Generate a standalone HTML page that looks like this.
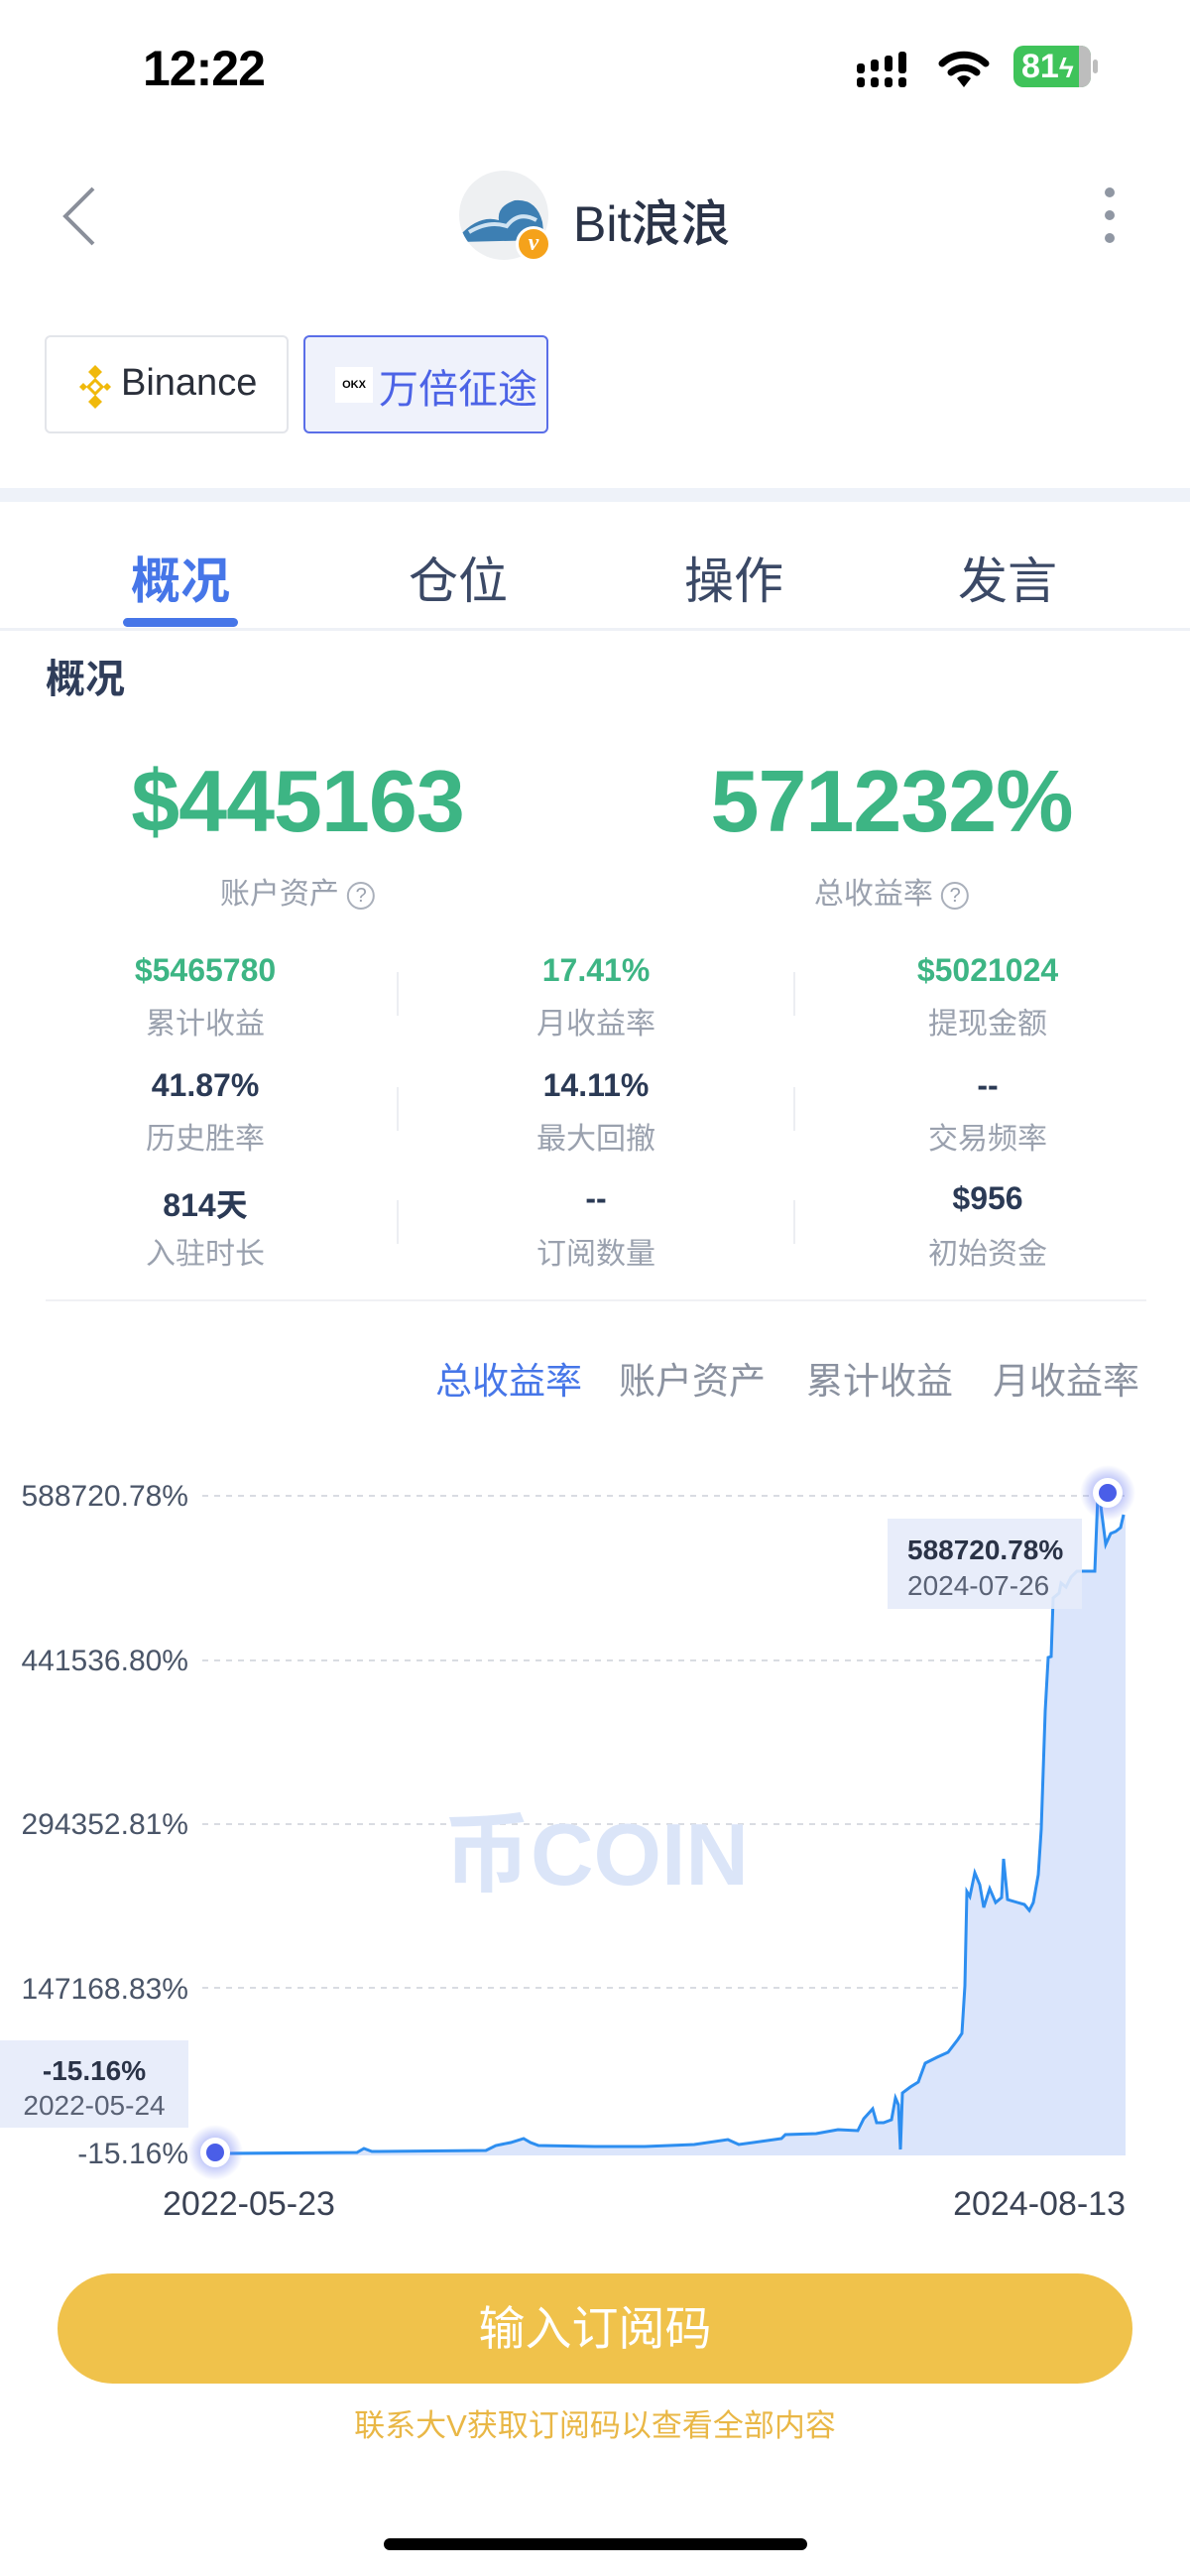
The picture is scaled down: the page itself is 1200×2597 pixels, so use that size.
<!DOCTYPE html>
<html><head><meta charset="utf-8">
<style>
*{margin:0;padding:0;box-sizing:border-box}
body{width:1200px;height:2597px;background:#fff;font-family:"Liberation Sans","Noto Sans CJK SC",sans-serif;position:relative;overflow:hidden;color:#2b3a55}
.a{position:absolute}
.c{transform:translateX(-50%);white-space:nowrap;text-align:center}
.g{color:#3db584}
.lbl{font-size:30px;color:#9aa1ae}
.val{font-size:32px;font-weight:bold}
</style></head><body>
<!-- status bar -->
<div class="a" style="left:144px;top:40px;font-size:50px;font-weight:bold;color:#000;letter-spacing:-1px">12:22</div>
<svg class="a" style="left:862px;top:50px" width="90" height="40" viewBox="0 0 90 40">
<rect x="2" y="14" width="8" height="10" rx="3" fill="#000"/><rect x="2" y="28" width="8" height="10" rx="3" fill="#000"/>
<rect x="16" y="10" width="8" height="12" rx="3" fill="#000"/><rect x="16" y="28" width="8" height="10" rx="3" fill="#000"/>
<rect x="30" y="6" width="8" height="16" rx="3" fill="#000"/><rect x="30" y="28" width="8" height="10" rx="3" fill="#000"/>
<rect x="44" y="2" width="8" height="22" rx="3" fill="#000"/><rect x="44" y="28" width="8" height="10" rx="3" fill="#000"/>
</svg>
<svg class="a" style="left:946px;top:48px" width="52" height="42" viewBox="0 0 52 42">
<path d="M4 16 A32 32 0 0 1 48 16" stroke="#000" stroke-width="7" fill="none" stroke-linecap="round"/>
<path d="M13 25 A20 20 0 0 1 39 25" stroke="#000" stroke-width="7" fill="none" stroke-linecap="round"/>
<path d="M19 31 L26 40 L33 31 A10 10 0 0 0 19 31Z" fill="#000"/></svg>
<div class="a" style="left:1022px;top:46px;width:78px;height:42px;border-radius:10px;background:#3fc35a;overflow:hidden"><div style="position:absolute;right:0;top:0;width:12px;height:42px;background:#bdbdbd"></div><div style="position:relative;color:#fff;font-weight:bold;font-size:34px;line-height:42px;padding-left:8px">81<span style="font-size:28px">ϟ</span></div></div>
<div class="a" style="left:1102px;top:60px;width:5px;height:14px;border-radius:3px;background:#bdbdbd"></div>
<!-- nav -->
<svg class="a" style="left:58px;top:186px" width="44" height="64" viewBox="0 0 44 64"><path d="M36 4 L8 32 L36 60" stroke="#8a8f9a" stroke-width="4" fill="none"/></svg>
<div class="a" style="left:463px;top:172px;width:90px;height:90px;border-radius:50%;background:#eef0f2;overflow:hidden">
<svg width="90" height="90" viewBox="0 0 90 90"><path d="M0 66 Q20 44 40 50 Q38 36 56 30 Q78 28 84 52 L86 70 L0 72Z" fill="#3d7fb3"/><path d="M10 62 Q30 50 48 56 Q60 40 78 50" stroke="#cfe3f2" stroke-width="4" fill="none"/></svg></div>
<div class="a" style="left:520px;top:228px;width:36px;height:36px;border-radius:50%;background:#f5a21b;border:3px solid #fff;color:#fff;font:bold italic 24px 'Liberation Serif',serif;text-align:center;line-height:28px">v</div>
<div class="a" style="left:578px;top:186px;font-size:50px;font-weight:500;color:#2a3347">Bit浪浪</div>
<div class="a" style="left:1114px;top:189px;width:10px;height:10px;border-radius:50%;background:#9097a3"></div>
<div class="a" style="left:1114px;top:212px;width:10px;height:10px;border-radius:50%;background:#9097a3"></div>
<div class="a" style="left:1114px;top:235px;width:10px;height:10px;border-radius:50%;background:#9097a3"></div>
<!-- exchanges -->
<div class="a" style="left:45px;top:338px;width:246px;height:99px;border:2px solid #e3e5ea;border-radius:6px"></div>
<svg class="a" style="left:76px;top:366px" width="40" height="48" viewBox="0 0 40 48"><g fill="#f0b90b"><path d="M20 2 L27 9 L20 16 L13 9Z"/><path d="M20 32 L27 39 L20 46 L13 39Z"/><path d="M4 24 l4-4 4 4-4 4z"/><path d="M28 24 l4-4 4 4-4 4z"/><path d="M20 17 l7 7-7 7-7-7z" fill="none" stroke="#f0b90b" stroke-width="3"/></g></svg>
<div class="a" style="left:122px;top:365px;font-size:38px;color:#2a2f3a">Binance</div>
<div class="a" style="left:306px;top:338px;width:247px;height:99px;border:2px solid #5a6ee8;border-radius:6px;background:#eff2fb"></div>
<div class="a" style="left:338px;top:370px;width:38px;height:36px;background:#fff;font-size:11px;font-weight:bold;line-height:36px;text-align:center;color:#000">OKX</div>
<div class="a" style="left:382px;top:360px;font-size:40px;color:#4c63e6">万倍征途</div>
<!-- band -->
<div class="a" style="left:0;top:492px;width:1200px;height:14px;background:#eef2f9"></div>
<!-- tabs -->
<div class="a c" style="left:182px;top:546px;font-size:50px;font-weight:bold;color:#4676e8">概况</div>
<div class="a c" style="left:462px;top:546px;font-size:50px;color:#3b4966">仓位</div>
<div class="a c" style="left:740px;top:546px;font-size:50px;color:#3b4966">操作</div>
<div class="a c" style="left:1016px;top:546px;font-size:50px;color:#3b4966">发言</div>
<div class="a" style="left:124px;top:623px;width:116px;height:9px;border-radius:5px;background:#4676e8"></div>
<div class="a" style="left:0;top:633px;width:1200px;height:3px;background:#eef1f6"></div>
<div class="a" style="left:46px;top:652px;font-size:40px;font-weight:bold;color:#2f3d5a">概况</div>
<!-- big numbers -->
<div class="a c g" style="left:300px;top:757px;font-size:88px;font-weight:bold;letter-spacing:-1px">$445163</div>
<div class="a c g" style="left:899px;top:757px;font-size:88px;font-weight:bold;letter-spacing:-1px">571232%</div>
<div class="a c lbl" style="left:300px;top:876px">账户资产 <span style="display:inline-block;width:28px;height:28px;border:2px solid #aab0bb;border-radius:50%;font-size:20px;line-height:24px;vertical-align:2px">?</span></div>
<div class="a c lbl" style="left:899px;top:876px">总收益率 <span style="display:inline-block;width:28px;height:28px;border:2px solid #aab0bb;border-radius:50%;font-size:20px;line-height:24px;vertical-align:2px">?</span></div>
<!-- stats -->
<div class="a c val g" style="left:207px;top:960px">$5465780</div>
<div class="a c val g" style="left:601px;top:960px">17.41%</div>
<div class="a c val g" style="left:996px;top:960px">$5021024</div>
<div class="a c lbl" style="left:207px;top:1007px">累计收益</div>
<div class="a c lbl" style="left:601px;top:1007px">月收益率</div>
<div class="a c lbl" style="left:996px;top:1007px">提现金额</div>
<div class="a c val" style="left:207px;top:1076px">41.87%</div>
<div class="a c val" style="left:601px;top:1076px">14.11%</div>
<div class="a c val" style="left:996px;top:1076px">--</div>
<div class="a c lbl" style="left:207px;top:1123px">历史胜率</div>
<div class="a c lbl" style="left:601px;top:1123px">最大回撤</div>
<div class="a c lbl" style="left:996px;top:1123px">交易频率</div>
<div class="a c val" style="left:207px;top:1190px">814天</div>
<div class="a c val" style="left:601px;top:1190px">--</div>
<div class="a c val" style="left:996px;top:1190px">$956</div>
<div class="a c lbl" style="left:207px;top:1239px">入驻时长</div>
<div class="a c lbl" style="left:601px;top:1239px">订阅数量</div>
<div class="a c lbl" style="left:996px;top:1239px">初始资金</div>
<div class="a" style="left:400px;top:980px;width:2px;height:44px;background:#eceef2"></div>
<div class="a" style="left:800px;top:980px;width:2px;height:44px;background:#eceef2"></div>
<div class="a" style="left:400px;top:1096px;width:2px;height:44px;background:#eceef2"></div>
<div class="a" style="left:800px;top:1096px;width:2px;height:44px;background:#eceef2"></div>
<div class="a" style="left:400px;top:1210px;width:2px;height:44px;background:#eceef2"></div>
<div class="a" style="left:800px;top:1210px;width:2px;height:44px;background:#eceef2"></div>
<div class="a" style="left:46px;top:1310px;width:1110px;height:2px;background:#f0f1f4"></div>
<!-- chart tabs -->
<div class="a" style="left:439px;top:1362px;font-size:37px;color:#4676e8">总收益率</div>
<div class="a" style="left:624px;top:1362px;font-size:37px;color:#8b92a0">账户资产</div>
<div class="a" style="left:813px;top:1362px;font-size:37px;color:#8b92a0">累计收益</div>
<div class="a" style="left:1001px;top:1362px;font-size:37px;color:#8b92a0">月收益率</div>
<!-- chart -->
<svg class="a" style="left:0;top:0" width="1200" height="2597" viewBox="0 0 1200 2597">
<defs><radialGradient id="gl"><stop offset="0.4" stop-color="#6b7cf0" stop-opacity="0.5"/><stop offset="1" stop-color="#6b7cf0" stop-opacity="0"/></radialGradient></defs>
<g stroke="#d9dce2" stroke-width="2" stroke-dasharray="6 6">
<line x1="204" y1="1508" x2="1135" y2="1508"/><line x1="204" y1="1674" x2="1135" y2="1674"/><line x1="204" y1="1839" x2="1135" y2="1839"/><line x1="204" y1="2004" x2="1135" y2="2004"/></g>
<g font-size="30" fill="#4a5568" text-anchor="end" font-family="Liberation Sans, sans-serif">
<text x="190" y="1518">588720.78%</text><text x="190" y="1684">441536.80%</text><text x="190" y="1849">294352.81%</text><text x="190" y="2015">147168.83%</text><text x="190" y="2181">-15.16%</text></g>
<text x="601" y="1900" text-anchor="middle" font-size="88" font-weight="bold" fill="#dbe5f8" font-family="Liberation Sans, Noto Sans CJK SC, sans-serif">币COIN</text>
<path d="M217 2171 L360 2170 L367 2166 L375 2169 L490 2168 L500 2163 L515 2160 L528 2156 L535 2160 L543 2163 L600 2164 L650 2164 L700 2162 L734 2157 L745 2162 L788 2156 L792 2152 L823 2151 L845 2147 L865 2148 L871 2136 L880 2126 L884 2140 L891 2140 L899 2137 L903 2115 L906 2122 L908 2167 L910 2110 L918 2104 L926 2099 L933 2080 L945 2074 L956 2069 L966 2056 L970 2050 L973 2002 L975 1907 L978 1912 L983 1888 L988 1900 L992 1923 L998 1904 L1004 1918 L1010 1913 L1012 1874 L1016 1915 L1026 1918 L1033 1920 L1038 1926 L1042 1918 L1047 1890 L1050 1844 L1054 1725 L1057 1671 L1060 1670 L1062 1611 L1068 1606 L1070 1596 L1075 1600 L1080 1590 L1086 1584 L1104 1584 L1107 1508 L1109 1510 L1115 1557 L1120 1546 L1125 1544 L1130 1540 L1133 1527 L1135 1527 L1135 2173 L217 2173Z" fill="#dbe5fb"/>
<path d="M217 2171 L360 2170 L367 2166 L375 2169 L490 2168 L500 2163 L515 2160 L528 2156 L535 2160 L543 2163 L600 2164 L650 2164 L700 2162 L734 2157 L745 2162 L788 2156 L792 2152 L823 2151 L845 2147 L865 2148 L871 2136 L880 2126 L884 2140 L891 2140 L899 2137 L903 2115 L906 2122 L908 2167 L910 2110 L918 2104 L926 2099 L933 2080 L945 2074 L956 2069 L966 2056 L970 2050 L973 2002 L975 1907 L978 1912 L983 1888 L988 1900 L992 1923 L998 1904 L1004 1918 L1010 1913 L1012 1874 L1016 1915 L1026 1918 L1033 1920 L1038 1926 L1042 1918 L1047 1890 L1050 1844 L1054 1725 L1057 1671 L1060 1670 L1062 1611 L1068 1606 L1070 1596 L1075 1600 L1080 1590 L1086 1584 L1104 1584 L1107 1508 L1109 1510 L1115 1557 L1120 1546 L1125 1544 L1130 1540 L1133 1527" fill="none" stroke="#2d8ef0" stroke-width="3"/>
<rect x="895" y="1531" width="196" height="91" fill="#e6ebfa" opacity="0.9"/>
<text x="915" y="1572" font-size="28" font-weight="bold" fill="#2a3347">588720.78%</text>
<text x="915" y="1608" font-size="28" fill="#5a6275">2024-07-26</text>
<rect x="0" y="2057" width="190" height="88" fill="#e6ebfa" opacity="0.9"/>
<text x="95" y="2097" text-anchor="middle" font-size="28" font-weight="bold" fill="#2a3347">-15.16%</text>
<text x="95" y="2132" text-anchor="middle" font-size="28" fill="#5a6275">2022-05-24</text>
<circle cx="217" cy="2170" r="28" fill="url(#gl)"/><circle cx="217" cy="2170" r="15" fill="#fff"/><circle cx="217" cy="2170" r="9" fill="#4a5ee8"/>
<circle cx="1117" cy="1505" r="28" fill="url(#gl)"/><circle cx="1117" cy="1505" r="15" fill="#fff"/><circle cx="1117" cy="1505" r="9" fill="#4a5ee8"/>
<text x="164" y="2233" font-size="34" fill="#3a4254">2022-05-23</text>
<text x="1135" y="2233" text-anchor="end" font-size="34" fill="#3a4254">2024-08-13</text>
</svg>
<!-- button -->
<div class="a" style="left:58px;top:2292px;width:1084px;height:111px;border-radius:56px;background:#f0c24b;color:#fff;font-size:47px;text-align:center;line-height:111px">输入订阅码</div>
<div class="a c" style="left:600px;top:2420px;font-size:31px;color:#e9b746">联系大V获取订阅码以查看全部内容</div>
<div class="a" style="left:387px;top:2559px;width:427px;height:12px;border-radius:6px;background:#000"></div>
</body></html>
